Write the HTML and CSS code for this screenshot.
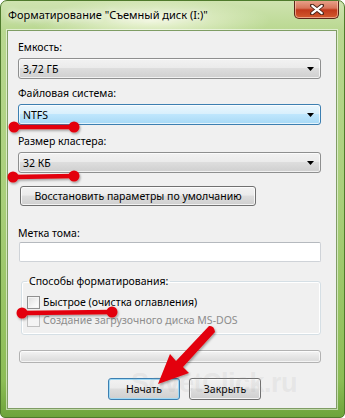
FILE: index.html
```html
<!DOCTYPE html>
<html lang="ru">
<head>
<meta charset="utf-8">
<title>Форматирование</title>
<link rel="stylesheet" href="styles.css">
</head>
<body>
<div class="window">
  <div class="titlebar">
    <span class="title">Форматирование "Съемный диск (I:)"</span>
    <div class="close"><svg width="14" height="11" viewBox="0 0 14 11"><path d="M2 1.5 L12 9.5 M12 1.5 L2 9.5" stroke="#4a2418" stroke-width="4" stroke-linecap="round"/><path d="M2.3 1.8 L11.7 9.2 M11.7 1.8 L2.3 9.2" stroke="#fff" stroke-width="2.2" stroke-linecap="round"/></svg></div>
  </div>
  <div class="client">
    <div class="label lbl-first">Емкость:</div>
    <div class="combo"><span>3,72 ГБ</span><svg class="arrow" width="7" height="4" viewBox="0 0 7 4"><path d="M0 0 H7 L3.5 4 Z" fill="#000"/></svg></div>
    <div class="label">Файловая система:</div>
    <div class="combo combo-hot"><span>NTFS</span><svg class="arrow" width="7" height="4" viewBox="0 0 7 4"><path d="M0 0 H7 L3.5 4 Z" fill="#000"/></svg></div>
    <div class="label lbl-gap">Размер кластера:</div>
    <div class="combo"><span>32 КБ</span><svg class="arrow" width="7" height="4" viewBox="0 0 7 4"><path d="M0 0 H7 L3.5 4 Z" fill="#000"/></svg></div>
    <div class="btn btn-restore">Восстановить параметры по умолчанию</div>
    <div class="label lbl-vol">Метка тома:</div>
    <div class="textbox"></div>
    <fieldset class="group">
      <legend>Способы форматирования:</legend>
      <div class="check"><span class="box"></span><span>Быстрое (очистка оглавления)</span></div>
      <div class="check disabled"><span class="box"></span><span>Создание загрузочного диска MS-DOS</span></div>
    </fieldset>
    <div class="progress"></div>
    <div class="buttons">
      <div class="btn btn-dlg btn-default">Начать</div>
      <div class="btn btn-dlg">Закрыть</div>
    </div>
  </div>
  <div class="watermark">SovetClick.ru</div>
  <svg class="marks" width="345" height="418" viewBox="0 0 345 418">
    <defs>
      <filter id="sh" x="-20%" y="-50%" width="140%" height="200%">
        <feDropShadow dx="1" dy="1.5" stdDeviation="1.2" flood-color="#000" flood-opacity="0.35"/>
      </filter>
    </defs>
    <g fill="#e3000b" stroke="#e3000b" filter="url(#sh)">
      <line x1="14" y1="127" x2="74" y2="127" stroke-width="4.5"/>
      <circle cx="14" cy="127" r="5.5" stroke="none"/>
      <circle cx="74" cy="127" r="5.5" stroke="none"/>
      <line x1="13" y1="177" x2="74" y2="176" stroke-width="4.5"/>
      <circle cx="13" cy="177" r="5.5" stroke="none"/>
      <circle cx="74" cy="176" r="5.5" stroke="none"/>
      <line x1="22" y1="313" x2="112" y2="312" stroke-width="4.5"/>
      <circle cx="22" cy="313" r="5.5" stroke="none"/>
      <circle cx="112" cy="312" r="5.5" stroke="none"/>
      <path d="M158 384 L189 373 L183 367 L215 332 Q214 325 209 326 L176 361 L170 354 Z" stroke="none"/>
    </g>
  </svg>
</div>
</body>
</html>
```
FILE: styles.css
```css
html, body {
  margin: 0;
  padding: 0;
  background: #ffffff;
}
body {
  width: 345px;
  height: 418px;
  overflow: hidden;
  font-family: "Noto Sans", "Open Sans", sans-serif;
  font-size: 10.5px;
  color: #000;
}
.window {
  position: relative;
  width: 345px;
  height: 418px;
  box-sizing: border-box;
  border: 1px solid #4f7a2c;
  border-radius: 7px 7px 5px 5px;
  background:
    radial-gradient(ellipse 120px 22px at 150px 20px, rgba(255,255,240,0.75), rgba(255,255,240,0) 100%),
    linear-gradient(to bottom, #cfe3b0 0px, #b9d890 30px, #a9cf7a 200px, #8cbd55 380px, #6ca23a 418px);
  display: flex;
  flex-direction: column;
  overflow: hidden;
}
.titlebar {
  height: 29px;
  flex: none;
  display: flex;
  align-items: flex-start;
  justify-content: space-between;
}
.title {
  margin: 6px 0 0 7px;
  font-size: 11px;
  line-height: 16px;
  color: #000;
  text-shadow: 0 0 6px #fff, 0 0 10px #fff;
}
.close {
  width: 45px;
  height: 19px;
  margin: -1px 5px 0 0;
  box-sizing: border-box;
  border: 1px solid #5a2418;
  border-top: none;
  border-radius: 0 0 5px 5px;
  background: linear-gradient(to bottom, #e9a58e 0%, #d8755b 45%, #c1391b 55%, #d25a2e 100%);
  box-shadow: inset 0 0 0 1px rgba(255,210,190,0.6);
  display: flex;
  align-items: center;
  justify-content: center;
}
.client {
  flex: 1;
  margin: 0 7px 8px 6px;
  box-sizing: border-box;
  border: 1px solid #7f9d64;
  background: #f0f0f0;
  padding: 8px 15px 8px 10px;
  display: flex;
  flex-direction: column;
  box-shadow: 0 0 0 1px rgba(255,255,255,0.55);
}
.label {
  line-height: 16px;
  margin-top: 6px;
  white-space: nowrap;
}
.lbl-first { margin-top: 0; }
.lbl-gap { margin-top: 8px; }
.lbl-vol { margin-top: 19px; }
.combo {
  margin-top: 3px;
  height: 21px;
  box-sizing: border-box;
  border: 1px solid #8e8f8f;
  border-radius: 3px;
  background: linear-gradient(to bottom, #f2f2f2 0%, #ebebeb 45%, #dddddd 50%, #cfcfcf 100%);
  box-shadow: inset 0 0 0 1px rgba(255,255,255,0.7);
  display: flex;
  align-items: center;
  justify-content: space-between;
  padding: 0 6px 0 4px;
}
.combo-hot {
  border-color: #3c7fb1;
  background: linear-gradient(to bottom, #eaf6fd 0%, #d9f0fc 45%, #bee6fd 50%, #a7d9f5 100%);
}
.arrow { flex: none; }
.btn {
  box-sizing: border-box;
  border: 1px solid #707070;
  border-radius: 3px;
  background: linear-gradient(to bottom, #f2f2f2 0%, #ebebeb 45%, #dddddd 50%, #cfcfcf 100%);
  box-shadow: inset 0 0 0 1px rgba(255,255,255,0.75);
  display: flex;
  align-items: center;
  justify-content: center;
  white-space: nowrap;
}
.btn-restore {
  margin: 13px 0 0 2px;
  width: 236px;
  height: 20px;
}
.textbox {
  margin: 1px 0 0 1px;
  height: 20px;
  box-sizing: border-box;
  border: 1px solid #cfd3d8;
  border-top-color: #b5b9be;
  border-radius: 2px;
  background: #fff;
}
.group {
  margin: 11px 0 0 3px;
  padding: 4px 6px 5px 5px;
  border: 1px solid #d5dfe5;
  border-radius: 3px;
  box-shadow: inset 0 0 0 1px #fff;
  min-width: 0;
}
.group legend {
  padding: 0 2px;
  line-height: 16px;
  margin-left: 0;
}
.check {
  height: 18px;
  display: flex;
  align-items: center;
  gap: 3px;
  white-space: nowrap;
}
.box {
  width: 11px;
  height: 11px;
  flex: none;
  border: 1px solid #8f8f8f;
  background: linear-gradient(135deg, #dcdcdc 0%, #f4f4f4 60%, #ffffff 100%);
  box-shadow: inset 0 0 0 1px #f4f4f4;
}
.disabled { color: #8d8d8d; }
.disabled .box { border-color: #c0c0c0; background: #f4f4f4; }
.progress {
  margin: 15px 0 0 1px;
  height: 13px;
  box-sizing: border-box;
  border: 1px solid #b2b2b2;
  border-radius: 3px;
  background: linear-gradient(to bottom, #f4f4f4 0%, #e6e6e6 50%, #dadada 100%);
  box-shadow: inset 0 0 0 1px rgba(255,255,255,0.7);
}
.buttons {
  margin: 15px 0 0 90px;
  display: flex;
  gap: 9px;
}
.btn-dlg {
  width: 72px;
  height: 22px;
}
.btn-default {
  border-color: #3c7fb1;
  box-shadow: inset 0 0 0 1px #9fd9f5;
  background: linear-gradient(to bottom, #f2f2f2 0%, #ebebeb 45%, #dddddd 50%, #cfcfcf 100%);
}
.watermark {
  position: absolute;
  left: 130px;
  top: 366px;
  font-family: "Liberation Sans", sans-serif;
  font-weight: bold;
  font-size: 27px;
  line-height: 32px;
  letter-spacing: -0.5px;
  color: rgba(160,160,160,0.14);
  white-space: nowrap;
  pointer-events: none;
}
.marks {
  position: absolute;
  left: -1px;
  top: -1px;
  pointer-events: none;
}
```
